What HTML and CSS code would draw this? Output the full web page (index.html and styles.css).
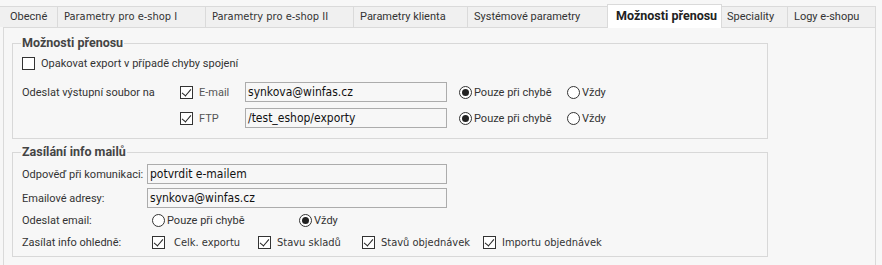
FILE: index.html
```html
<!DOCTYPE html>
<html lang="cs">
<head>
    <meta charset="UTF-8">
    <title>Možnosti přenosu</title>
    <link rel="stylesheet" href="styles.css">
</head>
<body>
    <div class="tabs">
        <div class="tab">Obecné</div>
        <div class="tab tah">Parametry pro e-shop I</div>
        <div class="tab tah">Parametry pro e-shop II</div>
        <div class="tab">Parametry klienta</div>
        <div class="tab">Systémové parametry</div>
        <div class="tab active">Možnosti přenosu</div>
        <div class="tab">Speciality</div>
        <div class="tab">Logy e-shopu</div>
    </div>
    <div class="panel">
        <fieldset class="group g1">
            <legend>Možnosti přenosu</legend>
            <div class="row r1">
                <span class="chk"></span>
                <span class="lbl">Opakovat export v případě chyby spojení</span>
            </div>
            <div class="row r2">
                <span class="cap w158">Odeslat výstupní soubor na</span>
                <span class="opt w65"><span class="chk on"></span><span class="lbl soft">E-mail</span></span>
                <span class="edit w202">synkova@winfas.cz</span>
                <span class="opt w108 ml12"><span class="rad on"></span><span class="lbl">Pouze při chybě</span></span>
                <span class="opt"><span class="rad"></span><span class="lbl">Vždy</span></span>
            </div>
            <div class="row r3">
                <span class="cap w158"></span>
                <span class="opt w65"><span class="chk on"></span><span class="lbl soft">FTP</span></span>
                <span class="edit w202">/test_eshop/exporty</span>
                <span class="opt w108 ml12"><span class="rad on"></span><span class="lbl">Pouze při chybě</span></span>
                <span class="opt"><span class="rad"></span><span class="lbl">Vždy</span></span>
            </div>
        </fieldset>
        <fieldset class="group g2">
            <legend>Zasílání info mailů</legend>
            <div class="row m1">
                <span class="cap w125">Odpověď při komunikaci:</span>
                <span class="edit w300">potvrdit e-mailem</span>
            </div>
            <div class="row m2">
                <span class="cap w125">Emailové adresy:</span>
                <span class="edit w300">synkova@winfas.cz</span>
            </div>
            <div class="row m3">
                <span class="cap w130">Odeslat email:</span>
                <span class="opt w147"><span class="rad"></span><span class="lbl">Pouze při chybě</span></span>
                <span class="opt"><span class="rad on"></span><span class="lbl">Vždy</span></span>
            </div>
            <div class="row m4">
                <span class="cap w130">Zasílat info ohledně:</span>
                <span class="opt w106"><span class="chk on"></span><span class="lbl tah wide">Celk. exportu</span></span>
                <span class="opt w104"><span class="chk on"></span><span class="lbl tah">Stavu skladů</span></span>
                <span class="opt w121"><span class="chk on"></span><span class="lbl tah">Stavů objednávek</span></span>
                <span class="opt"><span class="chk on"></span><span class="lbl tah">Importu objednávek</span></span>
            </div>
        </fieldset>
    </div>
</body>
</html>
```

FILE: styles.css
```css
*{
    padding: 0;
    margin: 0;
    box-sizing: border-box;
}
body{
    background: #f7f7f7;
    color: #333333;
    font-family: Roboto, "Noto Sans", sans-serif;
    font-size: 11px;
    width: 882px;
    height: 265px;
    overflow: hidden;
}
.tah{
    font-family: "DejaVu Sans Condensed", "DejaVu Sans", sans-serif;
    font-stretch: condensed;
    font-size: 11px;
}
.tabs{
    display: grid;
    grid-template-columns: 57px 148px 148px 114px 140px 115px 65px 89px;
    align-items: end;
    padding-top: 4px;
}
.tab{
    height: 21px;
    line-height: 19px;
    padding-left: 6px;
    background: #f0f0f0;
    border-top: 1px solid #dadada;
    border-left: 1px solid #dadada;
    white-space: nowrap;
}
.tab:first-child{
    padding-left: 10px;
    border-left: none;
}
.tab:last-child{
    border-right: 1px solid #dadada;
}
.tab.active{
    height: 24px;
    margin-bottom: -1px;
    position: relative;
    z-index: 1;
    background: #ffffff;
    border-right: 1px solid #dadada;
    padding-left: 8px;
    line-height: 22px;
    font-size: 12.5px;
    font-weight: bold;
    color: #222222;
}
.tab.active + .tab{
    border-left: none;
    padding-left: 5px;
}
.panel{
    margin-left: 3px;
    width: 873px;
    height: 240px;
    border: 1px solid #dadada;
}
.group{
    width: 756px;
    margin-left: 8px;
    border: 1px solid #d8d8d8;
    padding: 0 9px;
}
.group legend{
    font-size: 12.5px;
    font-weight: bold;
    color: #444444;
    line-height: 16px;
    padding: 0 1px;
    margin-left: -1px;
}
.g1{
    margin-top: 7px;
    padding-bottom: 10px;
}
.g2{
    margin-top: 5px;
    padding-bottom: 4px;
}
.row{
    display: flex;
    align-items: center;
    height: 20px;
}
.r1{ margin-top: 2px; }
.r2{ margin-top: 9px; }
.r3{ margin-top: 6px; }
.m1{ margin-top: 4px; }
.m2{ margin-top: 4px; }
.m3{ margin-top: 2px; }
.m4{ margin-top: 2px; }
.cap{
    flex: none;
    white-space: nowrap;
}
.opt{
    flex: none;
    display: flex;
    align-items: center;
    white-space: nowrap;
}
.w65{ width: 65px; }
.w104{ width: 104px; }
.w106{ width: 106px; }
.w108{ width: 108px; }
.w121{ width: 121px; }
.w125{ width: 125px; }
.w130{ width: 130px; }
.w147{ width: 147px; }
.w158{ width: 158px; }
.w202{ width: 202px; }
.w300{ width: 300px; }
.ml12{ margin-left: 12px; }
.edit{
    flex: none;
    height: 20px;
    border: 1px solid #acacac;
    padding-left: 2px;
    line-height: 18px;
    font-family: "DejaVu Sans Condensed", "DejaVu Sans", sans-serif;
    font-stretch: condensed;
    font-size: 12px;
    color: #111111;
    white-space: nowrap;
}
.chk{
    flex: none;
    width: 13px;
    height: 13px;
    border: 1px solid #333333;
    background: #ffffff;
    position: relative;
}
.chk.on::after{
    content: "";
    position: absolute;
    left: 3px;
    top: 0px;
    width: 4px;
    height: 8px;
    border-right: 1px solid #222222;
    border-bottom: 1px solid #222222;
    transform: rotate(40deg);
}
.chk + .lbl{
    margin-left: 6px;
}
.chk + .lbl.wide{
    margin-left: 9px;
}
.rad{
    flex: none;
    width: 13px;
    height: 13px;
    border: 1px solid #333333;
    border-radius: 50%;
    background: #ffffff;
    display: flex;
    align-items: center;
    justify-content: center;
}
.rad.on::after{
    content: "";
    width: 7px;
    height: 7px;
    border-radius: 50%;
    background: #222222;
}
.rad + .lbl{
    margin-left: 2px;
}
.soft{
    color: #555555;
}
```
